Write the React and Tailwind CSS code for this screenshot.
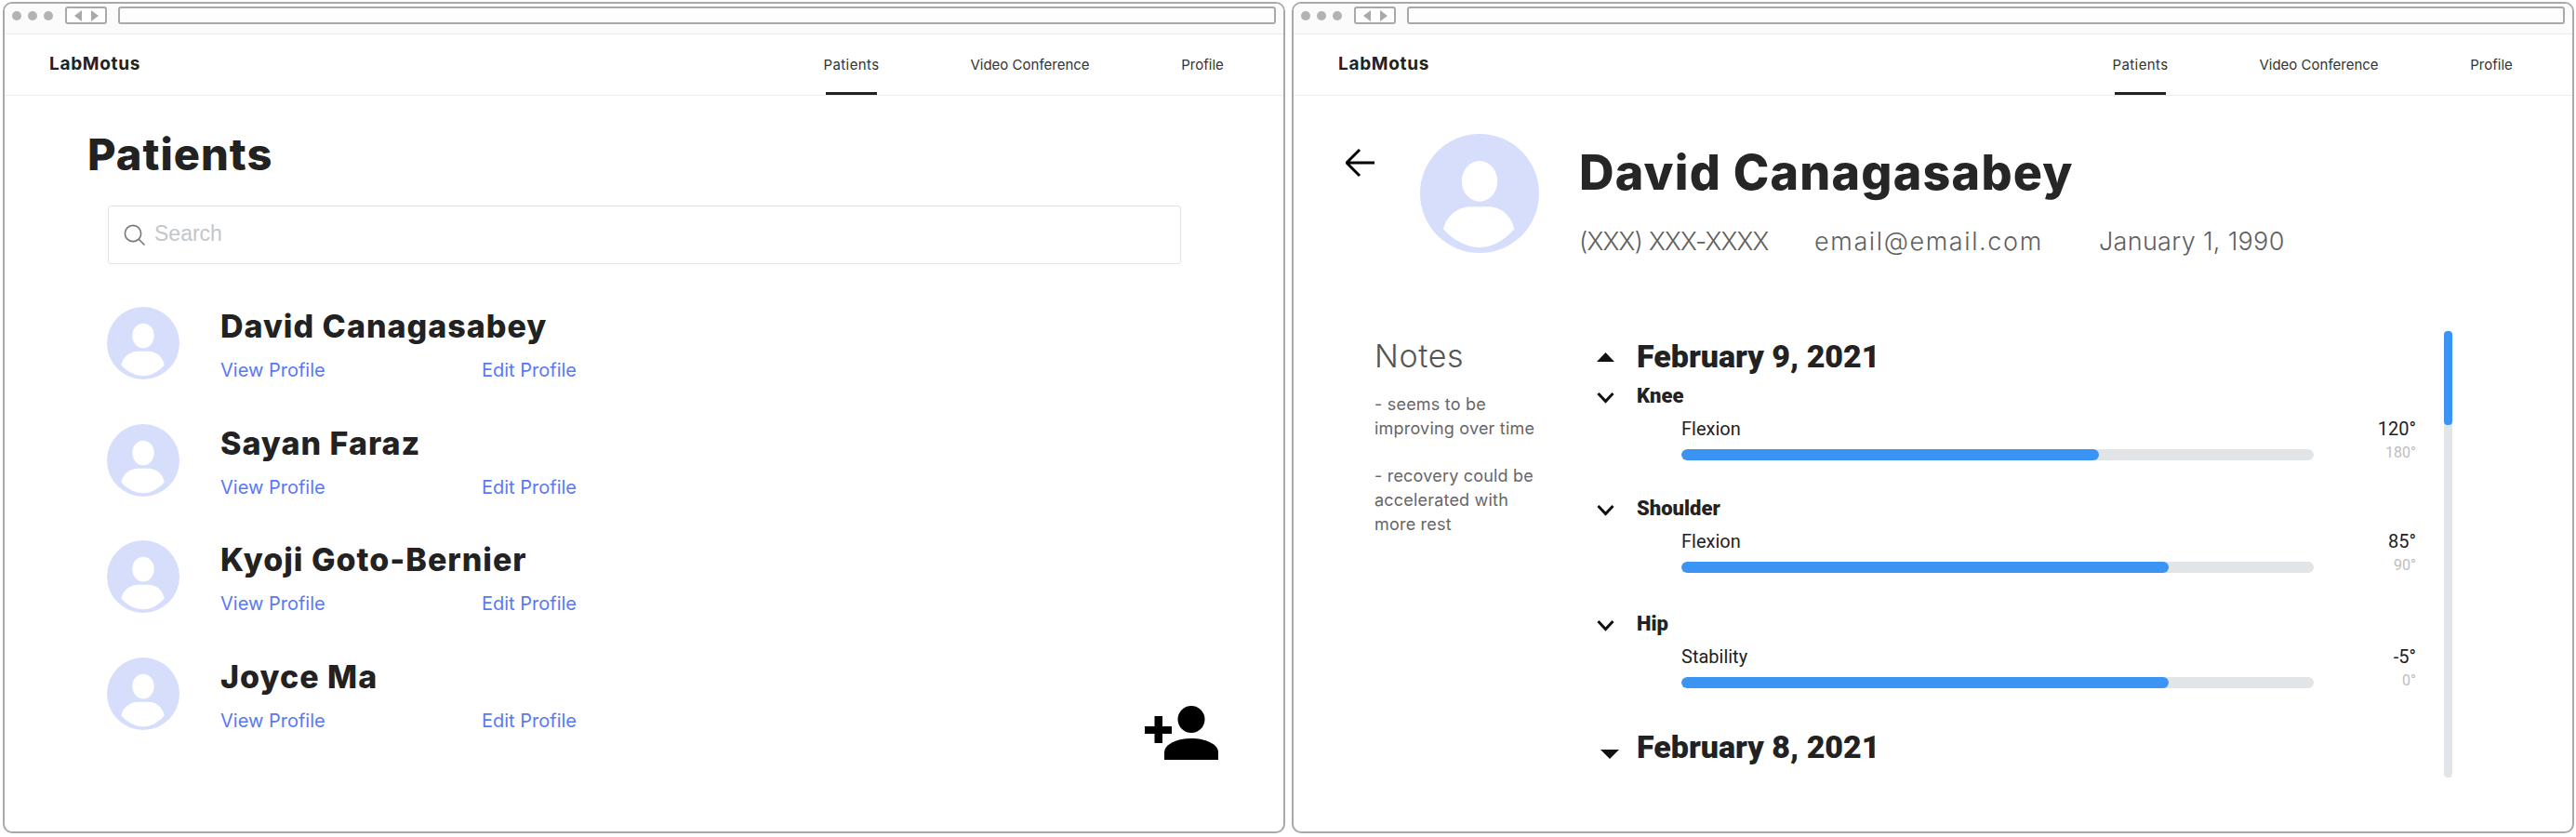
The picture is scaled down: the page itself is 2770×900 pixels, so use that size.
import React from 'react';

const patients = ['David Canagasabey', 'Sayan Faraz', 'Kyoji Goto-Bernier', 'Joyce Ma'];

const Avatar = ({ className }) => (
  <svg viewBox="0 0 78 78" className={className}>
    <circle cx="39" cy="39" r="39" fill="#d6defc" />
    <ellipse cx="39" cy="31" rx="11.7" ry="13.3" fill="#fff" />
    <path d="M15.3 62.5C17 53 26 47.7 33 47.7H45C52 47.7 60 53 61.7 62.5C55 70 47 74.3 39 74.3C31 74.3 22 70 15.3 62.5Z" fill="#fff" />
  </svg>
);

const Browser = ({ children }) => (
  <div className="relative flex h-[894px] w-[1379px] flex-col overflow-hidden rounded-[10px] border-2 border-[#a9a9a9] bg-white font-['Inter',sans-serif]">
    <div className="flex h-[33px] items-start gap-[12px] border-b border-[#ececec] bg-[#fbfbfb] pl-[8px] pr-[8px] pt-[3px]">
      <div className="flex h-[19px] items-center gap-[7px]">
        <span className="h-[10px] w-[10px] rounded-full bg-[#b3b3b3]" />
        <span className="h-[10px] w-[10px] rounded-full bg-[#b3b3b3]" />
        <span className="h-[10px] w-[10px] rounded-full bg-[#b3b3b3]" />
      </div>
      <div className="ml-[1px] flex h-[19px] w-[45px] items-center justify-center gap-[10px] rounded-[3px] border-2 border-[#a9a9a9] bg-white">
        <svg width="8" height="12" viewBox="0 0 8 12"><path d="M8 0V12L0 6Z" fill="#a9a9a9" /></svg>
        <svg width="8" height="12" viewBox="0 0 8 12"><path d="M0 0V12L8 6Z" fill="#a9a9a9" /></svg>
      </div>
      <div className="h-[19px] flex-1 rounded-[3px] border-2 border-[#a9a9a9] bg-[#fdfdfd]" />
    </div>
    <div className="flex h-[66px] items-center justify-between border-b border-[#ececec] pl-[48px] pr-[64px]">
      <span className="text-[19px] font-bold tracking-[0.7px] text-[#222]">LabMotus</span>
      <nav className="flex h-full gap-[99px] pt-[1px] text-[15px] text-[#333]">
        <a className="relative flex w-[59px] items-center justify-center tracking-[0.4px]">
          Patients
          <span className="absolute inset-x-[2px] bottom-0 h-[3px] bg-[#222]" />
        </a>
        <a className="flex w-[127px] items-center justify-center whitespace-nowrap">Video Conference</a>
        <a className="flex w-[46px] items-center justify-center">Profile</a>
      </nav>
    </div>
    {children}
  </div>
);

const PatientsPage = () => (
  <Browser>
    <div className="flex flex-col pl-[89px] pt-[36px]">
      <h1 className="text-[47px] font-extrabold leading-[54px] tracking-[1px] text-[#222]">Patients</h1>
      <div className="ml-[22px] mt-[28px] flex h-[63px] w-[1154px] items-center gap-[9px] rounded-[3px] border border-[#e2e2e2] pl-[16px]">
        <svg width="24" height="24" viewBox="0 0 24 24" fill="none" stroke="#777" strokeWidth="1.6">
          <circle cx="10" cy="10" r="8.6" />
          <path d="M16.2 16.2L22.5 22.5" />
        </svg>
        <span className="mb-[2px] font-['Liberation_Sans',sans-serif] text-[23px] text-[#c2c7cb]">Search</span>
      </div>
      <div className="ml-[21px] mt-[46px] flex flex-col">
        {patients.map((name) => (
          <div key={name} className="flex h-[125.5px] items-start gap-[44px]">
            <Avatar className="h-[78px] w-[78px]" />
            <div className="flex flex-col pt-[1px]">
              <div className="text-[34px] font-extrabold leading-[40px] tracking-[1px] text-[#222]">{name}</div>
              <div className="mt-[15px] flex text-[20px] leading-[24px] text-[#5a78f5]">
                <a className="w-[281px]">View Profile</a>
                <a>Edit Profile</a>
              </div>
            </div>
          </div>
        ))}
      </div>
    </div>
    <svg viewBox="0 0 79 58" className="absolute bottom-[77px] right-[70px] h-[58px] w-[79px]">
      <circle cx="50" cy="14.5" r="14.5" />
      <path d="M21 58V50C21 41 35 35 50 35C65 35 79 41 79 50V58Z" />
      <path d="M10.5 11H19V22H29V30H19V40H10.5V30H0V22H10.5Z" />
    </svg>
  </Browser>
);

const Metric = ({ label, value, max, fill }) => (
  <div className="ml-[91px] mt-[10px] grid w-[790px] grid-cols-[680px_1fr] font-['Roboto',sans-serif]">
    <div>
      <div className="text-[20px] leading-[24px] text-[#222]">{label}</div>
      <div className="mt-[10px] h-[12px] overflow-hidden rounded-[6px] bg-[#e2e5e8]">
        <div className="h-full rounded-[6px] bg-[#3b93f3]" style={{ width: fill }} />
      </div>
    </div>
    <div className="flex flex-col items-end">
      <div className="text-[20px] leading-[24px] text-[#222]">{value}</div>
      <div className="mt-[4px] text-[16px] leading-[20px] text-[#bdbdbd]">{max}</div>
    </div>
  </div>
);

const Joint = ({ name, className, children }) => (
  <div className={className}>
    <div className="flex h-[26px] items-center font-['Roboto',sans-serif]">
      <svg width="19" height="13" viewBox="0 0 19 13" fill="none" stroke="#111" strokeWidth="3" className="mr-[24px] mt-[3px]">
        <path d="M1.5 2L9.5 10.5L17.5 2" />
      </svg>
      <span className="text-[22px] font-black leading-[26px] text-[#222]">{name}</span>
    </div>
    {children}
  </div>
);

const DetailPage = () => (
  <Browser>
    <div className="flex pl-[56px] pt-[41px]">
      <svg width="32" height="32" viewBox="0 0 32 32" fill="none" stroke="#000" strokeWidth="3" className="mt-[15px]">
        <path d="M31 16H1.5M15 2L1 16L15 30" />
      </svg>
      <Avatar className="ml-[48px] h-[128px] w-[128px]" />
      <div className="ml-[43px] flex flex-col">
        <h1 className="mt-[12px] whitespace-nowrap text-[52px] font-extrabold leading-[60px] tracking-[1.2px] text-[#262626]">David Canagasabey</h1>
        <div className="mt-[27px] flex text-[27px] font-light leading-[34px] text-[#5f5f5f]">
          <span className="w-[253px] tracking-[-0.85px]">(XXX) XXX-XXXX</span>
          <span className="w-[306px] tracking-[1.6px]">email@email.com</span>
          <span className="tracking-[0.3px]">January 1, 1990</span>
        </div>
      </div>
    </div>
    <div className="mt-[79px] flex pl-[87px]">
      <div className="w-[239px] text-[#666]">
        <div className="mt-[7px] text-[34px] font-light leading-[40px] tracking-[0.6px] text-[#555]">Notes</div>
        <div className="mt-[19px] text-[18px] leading-[25.7px] tracking-[0.2px]">
          <p>- seems to be<br />improving over time</p>
          <p className="mt-[26px]">- recovery could be<br />accelerated with<br />more rest</p>
        </div>
      </div>
      <div className="w-[881px] pt-[7px] font-['Roboto',sans-serif]">
        <div className="flex h-[40px] items-center">
          <svg width="19" height="10" viewBox="0 0 19 10" className="mr-[24px] mt-[2px]"><path d="M9.5 0L19 10H0Z" fill="#111" /></svg>
          <span className="text-[34px] font-black leading-[40px] text-[#222]">February 9, 2021</span>
        </div>
        <Joint name="Knee" className="mt-[10px]">
          <Metric label="Flexion" value="120°" max="180°" fill="66%" />
        </Joint>
        <Joint name="Shoulder" className="mt-[37px]">
          <Metric label="Flexion" value="85°" max="90°" fill="77%" />
        </Joint>
        <Joint name="Hip" className="mt-[40px]">
          <Metric label="Stability" value="-5°" max="0°" fill="77%" />
        </Joint>
        <div className="mt-[41px] flex h-[40px] items-center">
          <svg width="20" height="10" viewBox="0 0 20 10" className="ml-[4px] mr-[19px] mt-[16px]"><path d="M0 0H20L10 10Z" fill="#111" /></svg>
          <span className="text-[34px] font-black leading-[40px] text-[#222]">February 8, 2021</span>
        </div>
      </div>
      <div className="ml-[30px] h-[480px] w-[9px] rounded-[4px] bg-[#e2e5e8]">
        <div className="h-[101px] rounded-[4px] bg-[#3b93f3]" />
      </div>
    </div>
  </Browser>
);

export default function App() {
  return (
    <div className="flex h-[900px] w-[2770px] gap-[7px] bg-white pl-[3px] pt-[2px]">
      <PatientsPage />
      <DetailPage />
    </div>
  );
}
